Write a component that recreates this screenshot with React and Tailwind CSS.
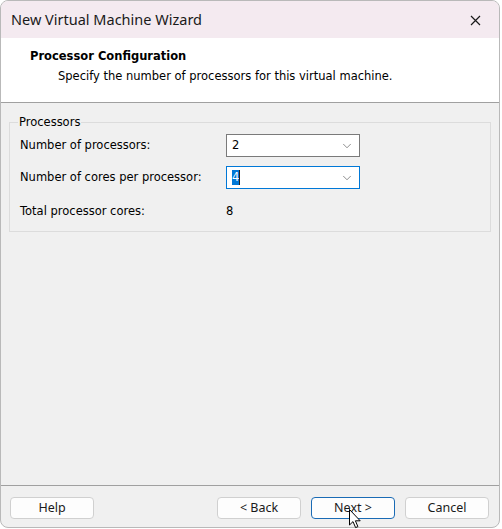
import { ChevronDown } from "lucide-react";

function Combo({ value, focused }) {
  return (
    <div
      className={`w-[134px] h-[23px] bg-white border flex items-center pl-[5px] pr-[5px] ${
        focused ? "border-[#0078d7]" : "border-[#7a7a7a]"
      }`}
    >
      {focused ? (
        <span className="flex items-center h-[15px] bg-[#0078d7] text-white leading-[15px]">
          {value}
          <span className="w-px h-[15px] bg-[#222]" />
        </span>
      ) : (
        <span className="leading-[15px]">{value}</span>
      )}
      <ChevronDown className="ml-auto text-[#505050]" size={14} strokeWidth={1.1} />
    </div>
  );
}

function Button({ children, primary }) {
  return (
    <button
      className={`w-[84px] h-[22px] rounded-[4px] border bg-[#fdfdfd] text-[12.5px] text-[#1a1a1a] leading-none ${
        primary ? "border-[#1a6bb5]" : "border-[#d0d0d0]"
      }`}
    >
      {children}
    </button>
  );
}

export default function App() {
  return (
    <div className="w-[502px] h-[529px] bg-white relative font-['Noto_Sans',sans-serif]">
      <div className="w-[500px] h-[528px] border border-[#b9b9b9] rounded-[8px] overflow-hidden flex flex-col bg-[#f0f0f0]">
        {/* title bar */}
        <div className="h-[37px] bg-[#f4eaf0] flex items-center pl-[10px] pr-[18px] pt-[1px] shrink-0">
          <span className="text-[14.5px] text-[#1a1a1a]">New Virtual Machine Wizard</span>
          <svg className="ml-auto" width="11" height="11" viewBox="0 0 11 11">
            <path d="M1 1 L10 10 M10 1 L1 10" stroke="#1a1a1a" strokeWidth="1.2" />
          </svg>
        </div>

        {/* header */}
        <div className="h-[65px] bg-white border-b border-[#a0a0a0] shrink-0 pt-[11px] font-['DejaVu_Sans',sans-serif] text-[11.5px] text-black">
          <div className="pl-[29px] font-bold leading-[14px]">Processor Configuration</div>
          <div className="pl-[57px] mt-[6px] leading-[14px]">
            Specify the number of processors for this virtual machine.
          </div>
        </div>

        {/* body */}
        <div className="flex-1 px-[8px] pt-[12px] font-['DejaVu_Sans',sans-serif] text-[11.5px] text-black">
          <fieldset className="border border-[#dcdcdc] w-[482px] pl-[10px] pt-[5px] pb-[13px]">
            <legend className="ml-[-2px] px-[1px] leading-[14px]">Processors</legend>
            <div className="flex flex-col gap-[9px]">
              <div className="flex items-center">
                <span className="w-[206px]">Number of processors:</span>
                <Combo value="2" />
              </div>
              <div className="flex items-center">
                <span className="w-[206px]">Number of cores per processor:</span>
                <Combo value="4" focused />
              </div>
            </div>
            <div className="flex items-center mt-[15px] leading-[14px]">
              <span className="w-[206px]">Total processor cores:</span>
              <span>8</span>
            </div>
          </fieldset>
        </div>

        {/* footer */}
        <div className="h-[42px] border-t border-[#a0a0a0] shrink-0 flex items-start pt-[11px] pl-[9px] pr-[10px]">
          <Button>Help</Button>
          <div className="ml-auto flex gap-[10px]">
            <Button>&lt; Back</Button>
            <Button primary>Next &gt;</Button>
            <Button>Cancel</Button>
          </div>
        </div>
      </div>

      {/* mouse pointer */}
      <svg className="absolute left-[349px] top-[509px]" width="13" height="20" viewBox="0 0 13 20">
        <path
          d="M0.5 0.5 L0.5 16 L4 12.6 L6.6 18.6 L8.9 17.6 L6.4 11.8 L11.2 11.8 Z"
          fill="white"
          stroke="black"
          strokeWidth="1"
          strokeLinejoin="round"
        />
      </svg>
    </div>
  );
}
